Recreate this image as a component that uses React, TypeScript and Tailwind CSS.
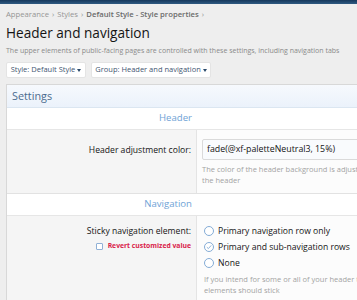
import React from 'react'

const font = { fontFamily: '"Open Sans", "Noto Sans", sans-serif' }

function Caret() {
  return <span className="ml-[2px] inline-block h-0 w-0 border-x-[2.5px] border-t-[3px] border-x-transparent border-t-[#2b4a6b] align-middle" />
}

function Radio({ checked, label }: { checked?: boolean; label: string }) {
  return (
    <div className="flex h-[16px] items-center">
      <span className="flex h-[10px] w-[10px] items-center justify-center rounded-full border border-[#84acd6] bg-white">
        {checked && (
          <svg width="6" height="6" viewBox="0 0 6 6">
            <path d="M0.8 3.2 L2.4 4.6 L5.2 1.4" fill="none" stroke="#84acd6" strokeWidth="0.9" />
          </svg>
        )}
      </span>
      <span className="ml-[4px] text-[8.6px] text-[#141414]">{label}</span>
    </div>
  )
}

export default function App() {
  return (
    <div className="h-[300px] w-[357px] overflow-hidden bg-[#eeeeee]" style={font}>
      <div className="h-[4px] bg-gradient-to-b from-[#16385c] to-[#2f5a82]" />
      <div className="px-[6px]">
        <div className="mt-[4px] flex items-center whitespace-nowrap text-[7.7px] leading-[12px] text-[#959595]">
          Appearance <span className="mx-[3px]">›</span> Styles <span className="mx-[3px]">›</span>
          <span className="font-semibold text-[#6a6a6a]">Default Style - Style properties</span>
          <span className="mx-[3px]">›</span>
        </div>
        <h1 className="mt-[4px] whitespace-nowrap text-[13.6px] leading-[18px] text-[#141414]">Header and navigation</h1>
        <p className="mt-[3px] whitespace-nowrap text-[7px] leading-[12px] text-[#8a8a8a]">
          The upper elements of public-facing pages are controlled with these settings, including navigation tabs
        </p>
        <div className="mt-[5px] flex gap-[5px]">
          <div className="flex h-[16px] w-[80px] items-center justify-center rounded-[2px] border border-[#e4e4e4] bg-white text-[7.5px] text-[#3f5672]">
            Style: Default Style<Caret />
          </div>
          <div className="flex h-[16px] w-[120px] items-center justify-center rounded-[2px] border border-[#e4e4e4] bg-white text-[7.5px] text-[#3f5672]">
            Group: Header and navigation<Caret />
          </div>
        </div>
      </div>
      <div className="ml-[6px] mt-[6px] w-[400px] border-l border-t border-[#d8d8d8]">
        <div className="flex h-[23px] items-center border-b border-[#dbe6f1] bg-gradient-to-b from-[#f6f9fd] to-[#ebf2fb] px-[5px] text-[10.8px] text-[#4a6b8e]">
          Settings
        </div>
        <div className="flex h-[21px] items-center bg-white">
          <div className="w-[185px] text-right text-[9.6px] text-[#6fa3d6]">Header</div>
        </div>
        <div className="flex h-[64px] border-t border-[#e6e6e6]">
          <div className="w-[190px] shrink-0 border-r border-[#e4e4e4] bg-[#f5f5f5] pr-[5px] pt-[14px] text-right text-[8.6px] leading-[12px] text-[#141414]">
            Header adjustment color:
          </div>
          <div className="flex-1 bg-[#fcfcfc] pl-[5px] pt-[9px]">
            <div className="flex h-[21px] items-center rounded-[2px] border border-[#dadada] bg-[#f9fbfd] px-[4px] text-[8.8px] text-[#141414]">
              fade(@xf-paletteNeutral3, 15%)
            </div>
            <div className="mt-[4px] whitespace-nowrap text-[7.5px] leading-[10.5px] text-[#a3a3a3]">
              The color of the header background is adjusted
              <br />
              the header
            </div>
          </div>
        </div>
        <div className="flex h-[22px] items-center border-t border-[#e2e2e2] bg-white">
          <div className="w-[185px] text-right text-[9.6px] text-[#6fa3d6]">Navigation</div>
        </div>
        <div className="flex h-[90px] border-t border-[#e6e6e6]">
          <div className="w-[190px] shrink-0 border-r border-[#e4e4e4] bg-[#f5f5f5] pr-[5px] pt-[9px] text-right">
            <div className="text-[8.6px] leading-[12px] text-[#141414]">Sticky navigation element:</div>
            <div className="mt-[3px] flex items-center justify-end text-[6.8px] font-bold leading-[12px] text-[#d9224a]">
              <span className="mr-[5px] inline-block h-[7px] w-[7px] rounded-[1px] border border-[#8fb0d6] bg-white" />
              Revert customized value
            </div>
          </div>
          <div className="flex-1 bg-[#fcfcfc] pl-[7px] pt-[7px]">
            <Radio label="Primary navigation row only" />
            <Radio checked label="Primary and sub-navigation rows" />
            <Radio label="None" />
            <div className="mt-[3px] whitespace-nowrap text-[7.5px] leading-[11px] text-[#a3a3a3]">
              If you intend for some or all of your header to
              <br />
              elements should stick
            </div>
          </div>
        </div>
      </div>
    </div>
  )
}
